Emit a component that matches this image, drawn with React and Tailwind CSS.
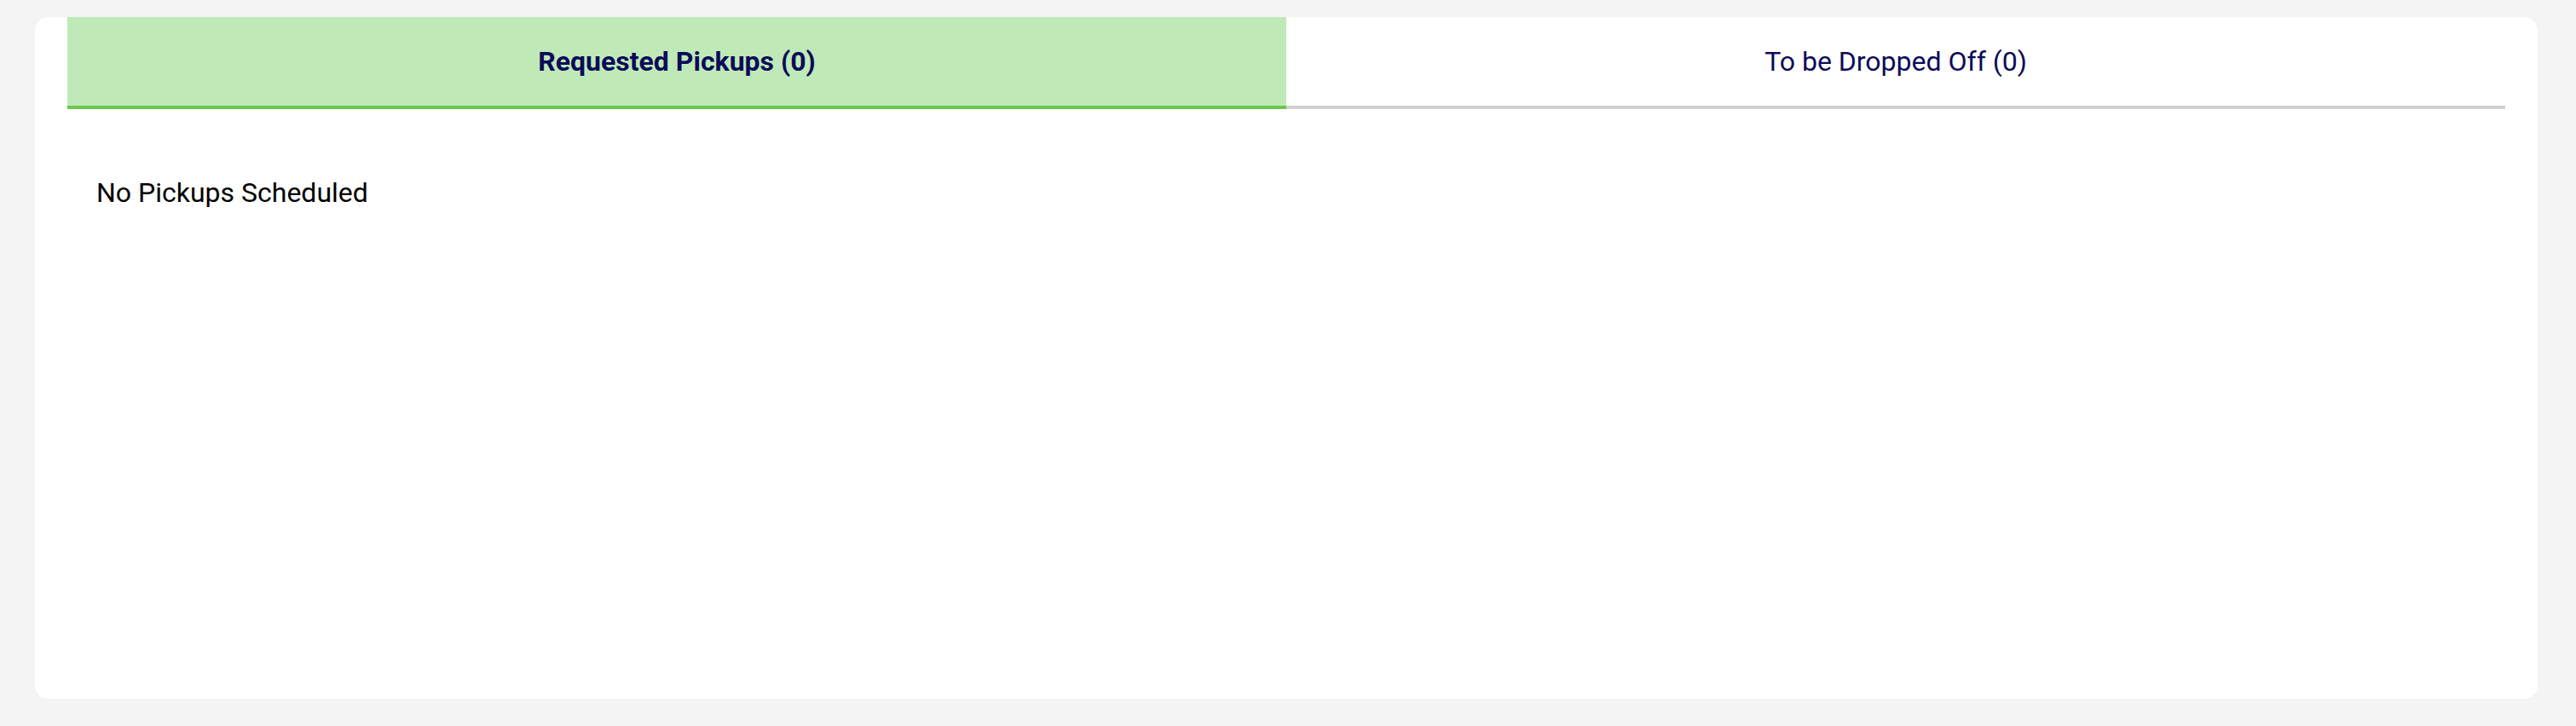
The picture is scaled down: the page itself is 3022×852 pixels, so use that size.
import { useState } from "react";

const tabs = [
    { key: "requested", label: "Requested Pickups (0)", empty: "No Pickups Scheduled" },
    { key: "dropoff", label: "To be Dropped Off (0)", empty: "No Drop Offs Scheduled" },
];

function App() {
    const [active, setActive] = useState("requested");
    const current = tabs.find(t => t.key === active);

    return (
        <div className="h-[852px] w-full bg-[#f4f4f4] pt-[20px] pl-[41px] pr-[45px] pb-[32px]" style={{ fontFamily: "Roboto, 'Liberation Sans', sans-serif" }}>
            <div className="h-full bg-white rounded-[16px] px-[38px]">
                <div className="flex">
                    {tabs.map(tab => {
                        const isActive = tab.key === active;
                        return (
                            <button
                                key={tab.key}
                                onClick={() => setActive(tab.key)}
                                className={isActive
                                    ? "flex-1 h-[108px] flex items-center justify-center bg-[#bfeab8] border-b-4 border-[#6bc74d] text-[32px] font-bold text-[#0b0b58] cursor-pointer"
                                    : "flex-1 h-[108px] flex items-center justify-center bg-white border-b-4 border-[#d0d0d0] text-[32px] font-normal text-[#0b0b58] cursor-pointer"}
                            >
                                {tab.label}
                            </button>
                        )
                    })}
                </div>
                <div className="pt-[80px] pl-[34px] text-[32px] leading-[37.5px] text-black">
                    {current.empty}
                </div>
            </div>
        </div>
    )
}

export default App;
